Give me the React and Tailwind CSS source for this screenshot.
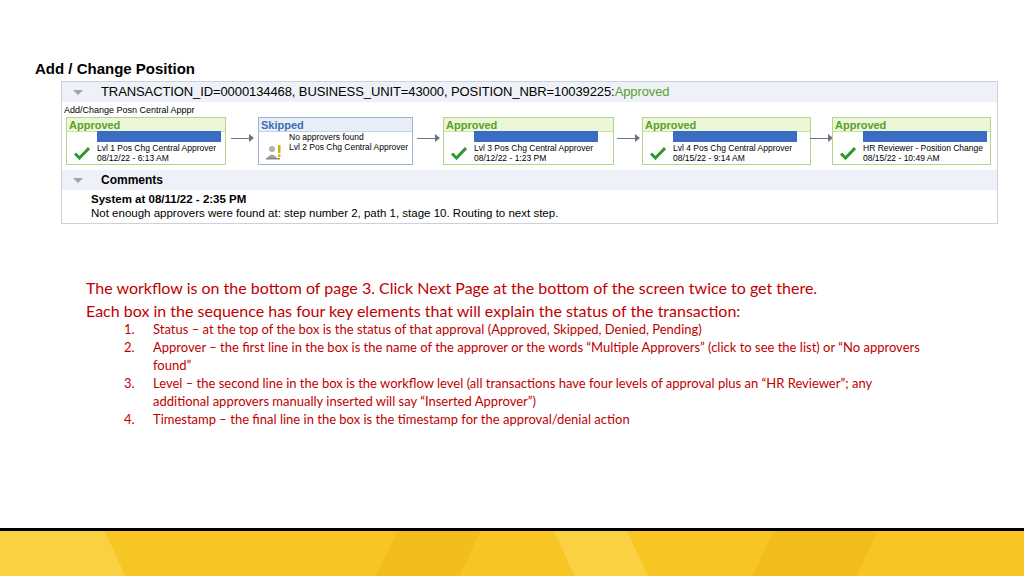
import React from 'react';

const Check = () => (
  <svg width="16" height="14" viewBox="0 0 16 14"><path d="M1 7.5 L5.5 12 L15 2" fill="none" stroke="#2e9a2e" strokeWidth="3" /></svg>
);

const Warn = () => (
  <svg width="18" height="16" viewBox="0 0 18 16">
    <circle cx="7" cy="5" r="3" fill="#b0b0b0" />
    <path d="M2 14 Q7 7 12 14 Z" fill="#a0a0a0" />
    <rect x="1" y="14" width="14" height="1.5" fill="#888" />
    <rect x="13" y="1" width="2.5" height="8" fill="#d4b000" />
    <rect x="13" y="10.5" width="2.5" height="2.5" fill="#d4b000" />
  </svg>
);

const Arrow = () => (
  <div className="flex items-center w-[26px] justify-center mt-[-6px]">
    <div className="w-[18px] h-px bg-gray-500" />
    <div className="w-0 h-0 border-y-[4px] border-y-transparent border-l-[5px] border-l-gray-500" />
  </div>
);

const Step = ({ w, status, lines, skipped }) => (
  <div className={`${w} h-[48px] border ${skipped ? 'border-[#9fb3d1]' : 'border-[#b5d68a]'} bg-white flex flex-col`}>
    <div className={`h-[14px] px-[2px] text-[11px] leading-[14px] font-bold border-b ${skipped ? 'bg-[#e8eef8] text-[#3a6fb5] border-[#c3d0e4]' : 'bg-[#ecf7d7] text-[#5a9e2a] border-[#c9e3a5]'}`}>{status}</div>
    <div className="flex flex-1">
      <div className="w-[30px] flex items-end justify-center pb-[4px]">{skipped ? <Warn /> : <Check />}</div>
      <div className="flex flex-col text-[8.5px] leading-[10px] text-black">
        {skipped ? null : <div className="h-[11px] w-[124px] bg-[#3b6cc4] mb-[1px] mt-[-1px]" />}
        {lines.map((l) => <div key={l} className="whitespace-nowrap">{l}</div>)}
      </div>
    </div>
  </div>
);

export default function App() {
  return (
    <div className="w-[1024px] h-[576px] bg-white flex flex-col relative overflow-hidden" style={{ fontFamily: 'Arial, "Liberation Sans", sans-serif' }}>
      <div className="pt-[59px] pl-[35px] text-[15px] font-bold text-black leading-[20px]">Add / Change Position</div>
      <div className="ml-[61px] mt-[2px] w-[937px] border border-[#c9d3df] bg-white">
        <div className="h-[20px] bg-[#eef2f8] flex items-center">
          <span className="w-0 h-0 ml-[11px] border-x-[5px] border-x-transparent border-t-[5px] border-t-[#9aa]" />
          <span className="ml-[18px] text-[13px] text-black tracking-[-0.1px]">TRANSACTION_ID=0000134468, BUSINESS_UNIT=43000, POSITION_NBR=10039225:<span className="text-[#5a9e2a]">Approved</span></span>
        </div>
        <div className="text-[9px] pl-[2px] pt-[2px] leading-[12px]">Add/Change Posn Central Apppr</div>
        <div className="flex items-center pl-[4px] pt-[1px] pb-[5px]">
          <Step w="w-[160px]" status="Approved" lines={['Lvl 1 Pos Chg Central Approver', '08/12/22 - 6:13 AM']} />
          <div className="w-[32px] flex justify-center"><Arrow /></div>
          <Step w="w-[155px]" skipped status="Skipped" lines={['No approvers found', 'Lvl 2 Pos Chg Central Approver']} />
          <div className="w-[30px] flex justify-center"><Arrow /></div>
          <Step w="w-[171px]" status="Approved" lines={['Lvl 3 Pos Chg Central Approver', '08/12/22 - 1:23 PM']} />
          <div className="w-[28px] flex justify-center"><Arrow /></div>
          <Step w="w-[169px]" status="Approved" lines={['Lvl 4 Pos Chg Central Approver', '08/15/22 - 9:14 AM']} />
          <div className="w-[21px] flex justify-center"><Arrow /></div>
          <Step w="w-[159px]" status="Approved" lines={['HR Reviewer - Position Change', '08/15/22 - 10:49 AM']} />
        </div>
        <div className="h-[20px] bg-[#eef2f8] flex items-center">
          <span className="w-0 h-0 ml-[11px] border-x-[5px] border-x-transparent border-t-[5px] border-t-[#9aa]" />
          <span className="ml-[18px] text-[12px] font-bold">Comments</span>
        </div>
        <div className="pl-[29px] pt-[2px] pb-[3px] text-[11.5px] leading-[14px]">
          <div className="font-bold">System at 08/11/22 - 2:35 PM</div>
          <div>Not enough approvers were found at: step number 2, path 1, stage 10. Routing to next step.</div>
        </div>
      </div>
      <div className="ml-[86px] mt-[52px] text-[#c00000]" style={{ fontFamily: 'Lato, "Open Sans", sans-serif' }}>
        <div className="text-[16px] leading-[23px]">The workflow is on the bottom of page 3. Click Next Page at the bottom of the screen twice to get there.</div>
        <div className="text-[16px] leading-[23px]">Each box in the sequence has four key elements that will explain the status of the transaction:</div>
        <ol className="text-[13px] leading-[18px] mt-[-2px]">
          {[
            'Status – at the top of the box is the status of that approval (Approved, Skipped, Denied, Pending)',
            'Approver – the first line in the box is the name of the approver or the words “Multiple Approvers” (click to see the list) or “No approvers found”',
            'Level – the second line in the box is the workflow level (all transactions have four levels of approval plus an “HR Reviewer”; any additional approvers manually inserted will say “Inserted Approver”)',
            'Timestamp – the final line in the box is the timestamp for the approval/denial action',
          ].map((t, i) => (
            <li key={i} className="flex">
              <span className="w-[67px] pl-[38px]">{i + 1}.</span>
              <span className="w-[775px]">{t}</span>
            </li>
          ))}
        </ol>
      </div>
      <div className="absolute left-0 top-[528px] w-full h-[48px] flex flex-col">
        <div className="h-[3px] bg-black" />
        <div className="flex-1 bg-[#f7c625]" style={{ backgroundImage: 'linear-gradient(115deg, transparent 0 38%, rgba(240,180,20,0.5) 38% 46%, transparent 46% 74%, rgba(240,180,20,0.5) 74% 84%, transparent 84%), linear-gradient(65deg, rgba(255,230,120,0.35) 0 12%, transparent 12% 55%, rgba(255,230,120,0.35) 55% 62%, transparent 62%)' }} />
      </div>
    </div>
  );
}
